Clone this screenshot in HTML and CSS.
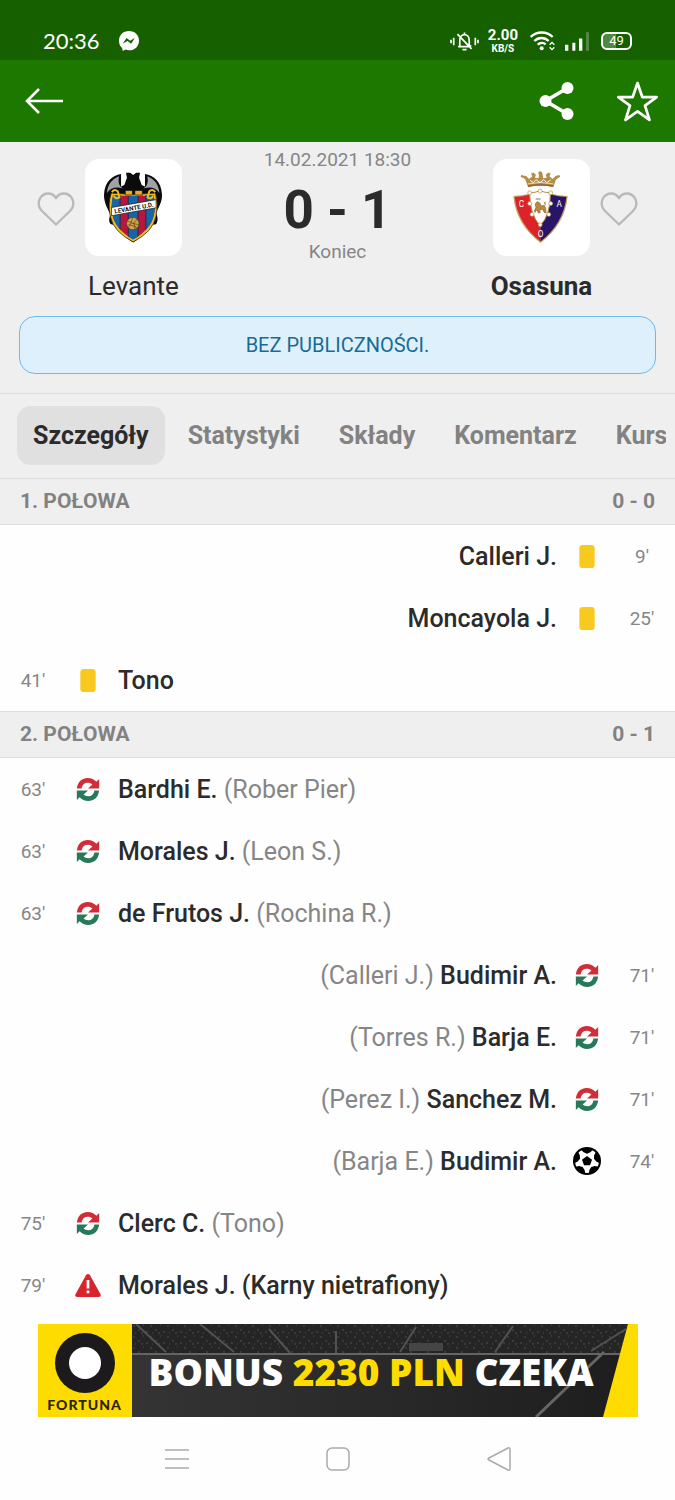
FILE: index.html
```
<!DOCTYPE html>
<html lang="pl">
<head>
<meta charset="utf-8">
<meta name="viewport" content="width=device-width, initial-scale=1">
<title>Levante - Osasuna</title>
<link rel="stylesheet" href="styles.css">
</head>
<body>
<svg class="defs" aria-hidden="true">
  <symbol id="heart" viewBox="0 0 38 36"><path d="M19 33.500 4.500 19.500C1 16 .8 10 3.500 6.500 7.500 1.200 15 1 19 7c4-6 11.500-5.800 15.500-.5C37.200 10 37 16 33.500 19.500Z" fill="none" stroke="#bababa" stroke-width="2.400" stroke-linejoin="round"/></symbol>
  <symbol id="swap" viewBox="0 0 66 68">
    <path d="M0 31C3 10 16 0 32 0c11 0 19 4 26 11l8-8v28H33l13-12c-4-3-8-5-14-5-10 0-16 6-18 17Z" fill="#d12d38"/>
    <path d="M66 37C63 58 50 68 34 68c-11 0-19-4-26-11l-8 8V37h33L20 49c4 3 8 5 14 5 10 0 16-6 18-17Z" fill="#27795a"/>
  </symbol>
  <symbol id="card" viewBox="0 0 16 24"><rect width="16" height="24" rx="3.500" fill="#f8c91e"/></symbol>
  <symbol id="ball" viewBox="0 0 84 84">
    <circle cx="42" cy="42" r="42" fill="#000"/>
    <circle cx="42" cy="42" r="36" fill="#fff"/>
    <path d="m42 27 15 11-6 17H33l-6-17Z" fill="#000"/>
    <path id="patch" d="M24 8q18-10 36 0l-8 8-10 4-10-4Z" fill="#000"/>
    <use href="#patch" transform="rotate(72 42 42)"/><use href="#patch" transform="rotate(144 42 42)"/><use href="#patch" transform="rotate(216 42 42)"/><use href="#patch" transform="rotate(288 42 42)"/>
  </symbol>
  <symbol id="alert" viewBox="0 0 76 68">
    <path d="M32 4q6-8 12 0l31 56q3 8-7 8H8q-10 0-7-8Z" fill="#d9242f"/>
    <path d="M34 18h8v25h-8zM34 49h8v8h-8z" fill="#fff"/>
  </symbol>
</svg>

<header class="top">
  <div class="status">
    <span class="clock">20:36</span>
    <svg class="messenger" viewBox="0 0 58 58" aria-label="Messenger"><path d="M29 0c17 0 29 12 29 28S46 56 29 56c-4 0-7-.5-10-2l-8 4-2-9C3 44 0 37 0 28 0 12 12 0 29 0Z" fill="#fff"/><path d="m11 36 11-16 10 8 14-8-11 17-10-8Z" fill="#166000"/></svg>
    <div class="status-icons">
      <svg class="bell" viewBox="0 0 86 56" fill="none" stroke="#fff" stroke-width="5"><path d="M3 23v10M11 17v22M75 17v22M83 23v10M24 43h38M29 43V25C29 2 57 2 57 25v14l6 4M22 6l42 44M43 8V1M37 52h12"/></svg>
      <span class="speed"><b>2.00</b><b class="unit">KB/S</b></span>
      <svg class="wifi" viewBox="0 0 75 58" fill="none" stroke="#fff" stroke-width="7"><path d="M2 17C20-1 50-1 68 17M13 29c12-12 31-12 43 0M23 40c7-6 17-7 24-1"/><circle cx="35" cy="51" r="6" fill="#fff" stroke="none"/><path d="m59 40 7-7 7 7M59 48l7 7 7-7" stroke-width="4"/></svg>
      <svg class="signal" viewBox="0 0 72 56" fill="#fff"><path d="M0 38h10v18H0zM22 32h9v24h-9zM42 19h10v37H42z"/><path d="M63 0h9v56h-9z" opacity=".25"/></svg>
      <span class="battery">49</span>
    </div>
  </div>
  <div class="toolbar">
    <button class="icon-button" aria-label="Wstecz"><svg class="back" viewBox="0 0 38 26" fill="none" stroke="#fff" stroke-width="2.600"><path d="M38 13H2M14 1 2 13l12 12"/></svg></button>
    <div class="actions">
      <button class="icon-button" aria-label="Udostępnij"><svg class="share" viewBox="0 0 34 38"><path d="M28 6 6 19l22 13" fill="none" stroke="#fff" stroke-width="3.600"/><g fill="#fff"><circle cx="28" cy="6" r="6"/><circle cx="6" cy="19" r="6"/><circle cx="28" cy="32" r="6"/></g></svg></button>
      <button class="icon-button" aria-label="Dodaj do ulubionych"><svg class="star" viewBox="0 0 120 120"><path d="m60 6 14 41h42L82 72l13 42-35-25-35 25 13-42L4 47h42Z" fill="none" stroke="#fff" stroke-width="8" stroke-linejoin="round"/></svg></button>
    </div>
  </div>
</header>

<main>
  <section class="match">
    <div class="scoreboard">
      <button class="fav" aria-label="Ulubione: Levante"><svg><use href="#heart"/></svg></button>
      <div class="team">
        <svg class="crest" viewBox="192 42 296 296" role="img" aria-label="Levante UD">
          <path d="M317 84h13l9 7 9-7h12l-3 15 8 22 10 5V88C402 92 425 112 427 150C428 175 415 190 409 208 416 220 415 240 405 242L392 243C380 265 365 280 339 297 313 280 298 265 287 243L274 242C264 240 264 222 270 212 262 195 249 175 250 150 252 112 275 92 302 88V126l10-5 8-22Z" fill="#0b0b0e"/>
          <path d="M259 146c2-28 16-42 37-51-4 19 0 30 12 37-20-6-37-4-49 14ZM419 146c-2-28-16-42-37-51 4 19 0 30-12 37 20-6 37-4 49 14Z" fill="#a2a2a6"/>
          <path d="M272 146q32 3 67 3 35 0 68-3 10 34 2 70-9 48-70 79-61-31-70-79-8-36 3-70Z" fill="#edbd23" stroke="#171310" stroke-width="2"/>
          <clipPath id="shield"><path d="M278 152q28 3 61 3t62-3q8 34 1 62-9 43-63 74-54-31-63-74-7-28 2-62Z"/></clipPath>
          <g clip-path="url(#shield)"><path fill="#b6173f" d="M270 145h140v150H270z"/><path d="M270 145h30v150h-30zM324 145h30v150h-30zM378 145h32v150h-32z" fill="#1466a6"/><path d="M299 145v150M324 145v150M354 145v150M378 145v150" stroke="#201626" stroke-width="2"/></g>
          <path d="M274 143q8-12 18-2l5 18q-12 8-17-5M406 143q-8-12-18-2l-5 18q12 8 17-5" fill="none" stroke="#efbc20" stroke-width="6"/>
          <path d="M315 138h22v14h-22zM344 138h23v14h-23z" fill="#f2a821" stroke="#111" stroke-width="2"/><path d="m334 134 6 20 7-20Z" fill="#111"/>
          <path d="m273 190 136-24v25l-136 24Z" fill="#fff" stroke="#111" stroke-width="2"/>
          <text x="341" y="198" transform="rotate(-10 341 190)" class="crest-name">LEVANTE U.D.</text>
          <circle cx="338" cy="239" r="19" fill="#d4a44b" stroke="#533512" stroke-width="2"/><path d="m322 231 16 8 15-14M337 221l-4 16-10 15M342 238l3 18M325 242l25 8M338 239l18 3" fill="none" stroke="#533512" stroke-width="2"/>
        </svg>
        <span class="team-name">Levante</span>
      </div>
      <div class="result">
        <time class="date">14.02.2021 18:30</time>
        <strong class="score">0 - 1</strong>
        <span class="state">Koniec</span>
      </div>
      <div class="team">
        <svg class="crest" viewBox="68 42 296 296" role="img" aria-label="CA Osasuna">
          <path d="M130 155q27-2 52-8h62q25 6 52 8-8 87-83 143-75-56-83-143Z" fill="#c5a064"/>
          <path d="M134 158q26-2 48-8h31v144q-69-54-79-136Z" fill="#db2329"/><path d="M213 150h31q22 6 48 8-10 82-79 136Z" fill="#291567"/>
          <path d="M180 145q17 0 32-6 15 6 31 6 1 68-31 100-32-32-32-100Z" fill="#fff" stroke="#b08b46" stroke-width="3"/>
          <g fill="#fff" stroke="#b08b46" stroke-width="2"><circle cx="180" cy="145" r="6"/><circle cx="212" cy="140" r="6"/><circle cx="244" cy="145" r="6"/><circle cx="180" cy="178" r="6"/><circle cx="244" cy="178" r="6"/><circle cx="187" cy="211" r="6"/><circle cx="238" cy="211" r="6"/><circle cx="212" cy="243" r="6"/></g>
          <path d="m197 179 6-7 9 5 1 8 12-1 4 10 1 12-6-1-4-9-9 1 1 9-6 1-4-11-6 9-2-5 5-9ZM228 183l-3-8 3-3" fill="#b98b3d" stroke="#8b642b" stroke-width="2"/><path d="M198 164h15" stroke="#a1a889" stroke-width="4"/>
          <path d="M175 128 167 105l-12-11 13-1 10 10 10-8-4-8 7-4 8 7-3 9 11 2 2-16h10l2 16 11-2-3-9 8-7 7 4-4 8 10 8 10-10 14 1-14 11-8 23q-39-8-77 0Z" fill="#b78c43"/>
          <circle cx="212" cy="85" r="6" fill="#b78c43"/><circle cx="157" cy="95" r="4" fill="#b78c43"/><circle cx="268" cy="95" r="4" fill="#b78c43"/><path d="M181 107l10 7 8-9 12 9 12-9 9 9 12-8" stroke="#fff" stroke-width="3" fill="none"/><path d="M174 118q38-9 78 0" fill="none" stroke="#fff" stroke-width="2"/><path d="M175 125q38-8 76 0" fill="none" stroke="#8d5950" stroke-width="4"/>
          <g class="crest-letters"><text x="155" y="189">C</text><text x="270" y="189">A</text><text x="213" y="280">O</text></g>
        </svg>
        <strong class="team-name">Osasuna</strong>
      </div>
      <button class="fav" aria-label="Ulubione: Osasuna"><svg><use href="#heart"/></svg></button>
    </div>
    <p class="notice">BEZ PUBLICZNOŚCI.</p>
  </section>

  <nav class="tabs">
    <div class="tab-strip">
      <a href="#szczegoly" class="tab active" aria-current="page">Szczegóły</a>
      <a href="#statystyki" class="tab">Statystyki</a>
      <a href="#sklady" class="tab">Składy</a>
      <a href="#komentarz" class="tab">Komentarz</a>
      <a href="#kursy" class="tab">Kursy</a>
    </div>
  </nav>

  <section id="szczegoly">
    <h2 class="period"><span>1. POŁOWA</span><span>0 - 0</span></h2>
    <ul class="events">
      <li class="event away"><span class="minute">9'</span><svg class="mark"><use href="#card"/></svg><span class="player">Calleri J.</span></li>
      <li class="event away"><span class="minute">25'</span><svg class="mark"><use href="#card"/></svg><span class="player">Moncayola J.</span></li>
      <li class="event"><span class="minute">41'</span><svg class="mark"><use href="#card"/></svg><span class="player">Tono</span></li>
    </ul>
    <h2 class="period"><span>2. POŁOWA</span><span>0 - 1</span></h2>
    <ul class="events">
      <li class="event"><span class="minute">63'</span><svg class="mark"><use href="#swap"/></svg><span class="player">Bardhi E. <span class="other">(Rober Pier)</span></span></li>
      <li class="event"><span class="minute">63'</span><svg class="mark"><use href="#swap"/></svg><span class="player">Morales J. <span class="other">(Leon S.)</span></span></li>
      <li class="event"><span class="minute">63'</span><svg class="mark"><use href="#swap"/></svg><span class="player">de Frutos J. <span class="other">(Rochina R.)</span></span></li>
      <li class="event away"><span class="minute">71'</span><svg class="mark"><use href="#swap"/></svg><span class="player"><span class="other">(Calleri J.)</span> Budimir A.</span></li>
      <li class="event away"><span class="minute">71'</span><svg class="mark"><use href="#swap"/></svg><span class="player"><span class="other">(Torres R.)</span> Barja E.</span></li>
      <li class="event away"><span class="minute">71'</span><svg class="mark"><use href="#swap"/></svg><span class="player"><span class="other">(Perez I.)</span> Sanchez M.</span></li>
      <li class="event away"><span class="minute">74'</span><svg class="mark goal"><use href="#ball"/></svg><span class="player"><span class="other">(Barja E.)</span> Budimir A.</span></li>
      <li class="event"><span class="minute">75'</span><svg class="mark"><use href="#swap"/></svg><span class="player">Clerc C. <span class="other">(Tono)</span></span></li>
      <li class="event"><span class="minute">79'</span><svg class="mark"><use href="#alert"/></svg><span class="player">Morales J. (Karny nietrafiony)</span></li>
    </ul>
  </section>

  <a class="ad" href="#fortuna">
    <span class="brand">
      <svg class="ring" viewBox="0 0 60 60"><circle cx="30" cy="30" r="30" fill="#1c1a1c"/><circle cx="30" cy="30" r="16" fill="#fff"/></svg>
      <span class="brand-name">FORTUNA</span>
    </span>
    <span class="promo">
      <svg class="stadium" viewBox="0 0 506 93" preserveAspectRatio="none" aria-hidden="true">
        <defs>
          <linearGradient id="pitch" x2="1" y2="0"><stop stop-color="#343434"/><stop offset="1" stop-color="#1d1d1d"/></linearGradient>
          <pattern id="crowd" width="17" height="11" patternUnits="userSpaceOnUse"><path d="M1 2h2M6 6h2M11 1h1M14 8h2M3 9h1M9 9h2" stroke="#414141" stroke-width="1.500"/></pattern>
        </defs>
        <path d="M0 0h506v93H0z" fill="url(#pitch)"/><path d="M0 0h506v30H0z" fill="#252525"/><path d="M0 0h506v30H0z" fill="url(#crowd)"/>
        <path d="m4 0 30 28M68 0l34 28M137 5l21 24M204 7v22M284 3l-16 25M381 2l-18 26M494 5l-35 22" stroke="#525252" stroke-width="2"/>
        <path d="M277 19h34v8h-34z" fill="#454545"/><path d="M0 30h506" stroke="#646464" stroke-width="2"/><path d="m472 28-68 65" stroke="#666" stroke-width="3"/>
        <path d="M496 0h10v93h-35Z" fill="#ffdc00"/>
      </svg>
      <span class="promo-text">BONUS <em>2230 PLN</em> CZEKA</span>
    </span>
  </a>
</main>

<footer class="system-nav">
  <button class="icon-button" aria-label="Ostatnie aplikacje"><svg viewBox="0 0 24 24"><path d="M0 3h24M0 12h24M0 21h24"/></svg></button>
  <button class="icon-button" aria-label="Ekran główny"><svg viewBox="0 0 24 24"><rect x="1" y="1" width="22" height="22" rx="5"/></svg></button>
  <button class="icon-button" aria-label="Cofnij"><svg viewBox="0 0 24 24"><path d="M21 1q2-1 2 2v18q0 3-2 2L2 13q-2-1 0-2Z"/></svg></button>
</footer>
</body>
</html>
```
FILE: styles.css
```
* { box-sizing: border-box; }

body {
  margin: 0;
  min-height: 100vh;
  display: flex;
  flex-direction: column;
  overflow-x: hidden;
  background: #fefefe;
  color: #2b2b2b;
  font-family: Roboto, "Noto Sans", sans-serif;
}

.defs { position: absolute; width: 0; height: 0; }
svg { display: block; }
button { padding: 0; border: 0; background: none; }
.icon-button { display: flex; }

.top { background: #1d7800; color: #fff; }

.status {
  display: flex;
  align-items: center;
  height: 60px;
  padding: 22px 43px 0;
  background: #166000;
}
.clock { font: 22px/38px Lato, sans-serif; }
.messenger { width: 20px; height: 20px; margin-left: 19px; }
.status-icons { display: flex; align-items: center; margin-left: auto; }
.bell { width: 29px; height: 19px; }
.speed { display: grid; margin-left: 9px; text-align: center; font-size: 15px; line-height: 16px; }
.unit { font-size: 10px; line-height: 12px; }
.wifi { width: 25px; height: 20px; margin-left: 12px; }
.signal { width: 24px; height: 19px; margin-left: 10px; }
.battery {
  width: 31px;
  height: 18px;
  margin-left: 12px;
  border: 2px solid #fff;
  border-radius: 6px;
  background: linear-gradient(90deg, #4f8840 50%, transparent 50%);
  font: 13px/14px Roboto, sans-serif;
  text-align: center;
}

.toolbar {
  display: flex;
  align-items: center;
  justify-content: space-between;
  height: 82px;
  padding: 0 17px 0 25px;
}
.actions { display: flex; align-items: center; gap: 43px; }
.back { width: 38px; height: 26px; }
.share { width: 35px; height: 38px; }
.star { width: 41px; height: 41px; }

.match { padding: 0 19px 19px; background: #efefef; }
.scoreboard { display: flex; padding: 0 18px; }
.fav { width: 38px; height: 36px; margin-top: 49px; }
.fav svg { width: 38px; height: 36px; }
.team {
  display: flex;
  flex-direction: column;
  align-items: center;
  width: 117px;
  padding-top: 17px;
}
.crest { width: 97px; height: 97px; border-radius: 14px; background: #fff; }
.crest-name { font: bold 19px Roboto, sans-serif; text-anchor: middle; fill: #111; }
.crest-letters { font: 25px Roboto, sans-serif; text-anchor: middle; fill: #fff; }
.team-name { margin-top: 14px; font-size: 26px; line-height: 32px; }
.result { display: flex; flex: 1; flex-direction: column; align-items: center; color: #868686; }
.date { margin-top: 6px; font-size: 19px; line-height: 24px; }
.score { color: #2b2b2b; font-size: 53px; line-height: 76px; }
.state { margin-top: -8px; font-size: 19px; line-height: 24px; }
.notice {
  margin: 14px 0 0;
  border: 1px solid #6cbbe8;
  border-radius: 16px;
  background: #def0fc;
  color: #176b99;
  font-size: 20px;
  line-height: 56px;
  text-align: center;
}

.tabs {
  padding: 12px 9px 13px 17px;
  border-top: 1px solid #dcdcdc;
  background: #efefef;
}
.tab-strip { display: flex; gap: 7px; overflow: hidden; }
.tab {
  flex: none;
  padding: 0 16px;
  border-radius: 14px;
  color: #828282;
  font-size: 25px;
  font-weight: 700;
  line-height: 59px;
  text-decoration: none;
}
.tab.active { background: #e0e0e0; color: #2b2b2b; }

.period {
  display: flex;
  justify-content: space-between;
  margin: 0;
  padding: 0 20px;
  border: 1px solid #dcdcdc;
  border-width: 1px 0;
  background: #efefef;
  color: #828282;
  font-size: 21px;
  font-weight: 700;
  line-height: 45px;
}
.events { margin: 0; padding: 0; list-style: none; }
.event { display: flex; align-items: center; height: 62px; padding: 0 20px; }
.event.away { flex-direction: row-reverse; }
.minute { width: 26px; color: #868686; font-size: 19px; text-align: center; white-space: nowrap; }
.mark { width: 36px; height: 23px; margin: 0 12px 0 24px; }
.away .mark { margin: 0 24px 0 12px; }
.mark.goal { height: 28px; }
.player { font-size: 25px; font-weight: 500; }
.other { color: #868686; font-weight: 400; }

.ad {
  display: flex;
  width: calc(100% - 75px);
  height: 93px;
  margin: 8px auto 0;
  color: #fff;
  text-decoration: none;
}
.brand {
  display: flex;
  flex-direction: column;
  align-items: center;
  width: 94px;
  padding-top: 9px;
  background: #ffdc00;
}
.ring { width: 60px; height: 60px; }
.brand-name { margin-top: 5px; color: #29250f; font: 900 14px/14px Lato, sans-serif; letter-spacing: 1px; }
.promo { display: grid; flex: 1; overflow: hidden; }
.promo > * { grid-area: 1 / 1; }
.stadium { width: 100%; height: 93px; }
.promo-text { padding-left: 17px; font: 800 37px/96px "Open Sans", sans-serif; white-space: nowrap; z-index: 1; }
.promo-text em { color: #ffdc00; font-style: normal; }

.system-nav {
  display: flex;
  flex: 1;
  align-items: center;
  justify-content: space-around;
  min-height: 83px;
  padding: 0 96px;
}
.system-nav svg { width: 24px; height: 24px; fill: none; stroke: #aaa; stroke-width: 1.500; }
```
